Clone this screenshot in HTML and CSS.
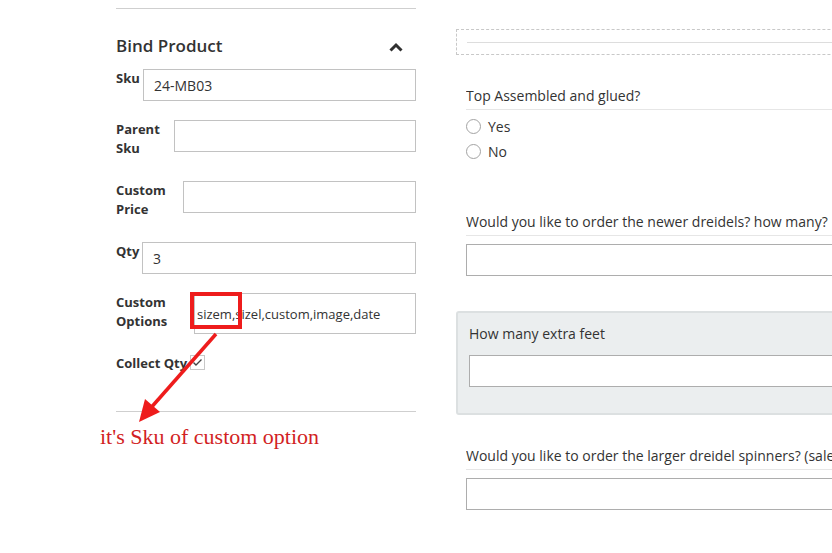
FILE: index.html
```html
<!DOCTYPE html>
<html>
<head>
<meta charset="utf-8">
<link rel="stylesheet" href="styles.css">
</head>
<body>
<div class="page">
  <div class="left">
    <div class="rule rule-top"></div>
    <div class="section-title">
      <span>Bind Product</span>
      <svg class="chevron" width="14" height="10" viewBox="0 0 14 10"><path d="M1.5 8.5 L7 3 L12.5 8.5" fill="none" stroke="#303030" stroke-width="3"/></svg>
    </div>
    <div class="field">
      <label class="lbl lbl-sku">Sku</label>
      <input class="inp" type="text" value="24-MB03">
    </div>
    <div class="field">
      <label class="lbl lbl-parent">Parent Sku</label>
      <input class="inp" type="text" value="">
    </div>
    <div class="field">
      <label class="lbl lbl-price">Custom Price</label>
      <input class="inp" type="text" value="">
    </div>
    <div class="field">
      <label class="lbl lbl-qty">Qty</label>
      <input class="inp" type="text" value="3">
    </div>
    <div class="field">
      <label class="lbl lbl-options">Custom Options</label>
      <input class="inp inp-options" type="text" value="sizem,sizel,custom,image,date">
    </div>
    <div class="field field-last">
      <label class="lbl lbl-collect">Collect Qty</label>
      <span class="checkbox"><svg width="11" height="9" viewBox="0 0 11 9"><path d="M1.5 4.5 L4 7 L9.5 1.5" fill="none" stroke="#444" stroke-width="1.4"/></svg></span>
    </div>
    <div class="rule rule-bottom"></div>
  </div>

  <div class="right">
    <div class="dash-box"><div class="dash-line"></div></div>

    <div class="q-title q-first">Top Assembled and glued?</div>
    <div class="radios">
      <div class="radio-row"><span class="radio"></span><span>Yes</span></div>
      <div class="radio-row"><span class="radio"></span><span>No</span></div>
    </div>

    <div class="q-title q-second">Would you like to order the newer dreidels? how many?</div>
    <input class="inp q-inp" type="text">

    <div class="grey-box">
      <div class="grey-title">How many extra feet</div>
      <input class="inp q-inp" type="text">
    </div>

    <div class="q-title q-third">Would you like to order the larger dreidel spinners? (sale price)</div>
    <input class="inp q-inp" type="text">
  </div>
</div>

<div class="mark-box"></div>
<svg class="arrow" width="832" height="553" viewBox="0 0 832 553">
  <line x1="216" y1="334" x2="149" y2="410" stroke="#ee1c1c" stroke-width="3.5"/>
  <polygon points="139,422 160,412 145,399" fill="#ee1c1c"/>
</svg>
<div class="note">it's Sku of custom option</div>
</body>
</html>
```

FILE: styles.css
```css
html, body {
  margin: 0;
  padding: 0;
  background: #fff;
}
body {
  width: 832px;
  height: 553px;
  overflow: hidden;
  position: relative;
  font-family: "Open Sans", "DejaVu Sans", sans-serif;
  color: #333;
}
.page {
  display: flex;
  gap: 40px;
  padding-left: 116px;
}
.left {
  width: 300px;
  flex: none;
}
.right {
  width: 520px;
  flex: none;
  overflow: hidden;
}
.rule {
  border-top: 1px solid #cfcfcf;
}
.rule-top {
  margin-top: 8px;
}
.rule-bottom {
  margin-top: 34px;
}
.section-title {
  display: flex;
  justify-content: space-between;
  align-items: center;
  padding-top: 26px;
  margin-bottom: 12px;
  padding-right: 13px;
  font-size: 17px;
  font-weight: 600;
  line-height: 22px;
  color: #333;
}
.chevron {
  display: block;
  margin-top: 1px;
}
.field {
  display: flex;
  align-items: flex-start;
  margin-bottom: 19px;
}
.field-last {
  margin-bottom: 0;
}
.lbl {
  flex: none;
  font-size: 13px;
  font-weight: 700;
  line-height: 19px;
  padding-bottom: 4px;
  color: #333;
}
.lbl-sku { width: 27px; }
.lbl-parent { width: 58px; }
.lbl-price { width: 67px; }
.lbl-qty { width: 26px; }
.lbl-options { width: 78px; }
.lbl-collect { width: 74px; white-space: nowrap; }
.inp {
  flex: 1;
  min-width: 0;
  box-sizing: border-box;
  height: 32px;
  border: 1px solid #c2c2c2;
  padding: 0 10px;
  margin: 0;
  font-family: "Open Sans", "DejaVu Sans", sans-serif;
  font-size: 14px;
  color: #333;
  background: #fff;
  outline: none;
}
.inp-options {
  height: 41px;
  padding: 0 2px;
  font-size: 13px;
}
.checkbox {
  box-sizing: border-box;
  width: 15px;
  height: 15px;
  margin-top: 1px;
  border: 1px solid #c8c8c8;
  display: flex;
  align-items: center;
  justify-content: center;
  background: #fff;
}
.dash-box {
  box-sizing: border-box;
  margin-top: 29px;
  height: 26px;
  border: 1px dashed #c8c8c8;
  padding-left: 10px;
}
.dash-line {
  margin-top: 12px;
  border-top: 1px solid #ddd;
}
.q-title {
  font-size: 14px;
  line-height: 20px;
  padding-bottom: 3px;
  margin-left: 10px;
  border-bottom: 1px solid #e6e6e6;
  white-space: nowrap;
  overflow: hidden;
  color: #333;
}
.q-first { margin-top: 31px; }
.q-second { margin-top: 48px; }
.q-third { margin-top: 31px; }
.radios {
  margin-left: 10px;
  margin-top: 9px;
}
.radio-row {
  display: flex;
  align-items: center;
  gap: 7px;
  height: 25px;
  font-size: 14px;
}
.radio-row:first-child { margin-top: -5px; }
.radio {
  box-sizing: border-box;
  width: 15px;
  height: 15px;
  border: 1px solid #a3a3a3;
  border-radius: 50%;
  background: #fff;
}
.q-inp {
  display: block;
  width: 100%;
  margin-top: 8px;
  margin-left: 10px;
  border-color: #adadad;
}
.grey-box {
  box-sizing: border-box;
  margin-top: 35px;
  height: 104px;
  background: #ebeeef;
  border: 2px solid #dce0e1;
  border-radius: 3px;
  padding: 11px 0 0 11px;
}
.grey-title {
  font-size: 14px;
  line-height: 20px;
}
.grey-box .q-inp {
  margin-left: 0;
  margin-top: 11px;
}
.mark-box {
  position: absolute;
  left: 190px;
  top: 292px;
  width: 52px;
  height: 37px;
  box-sizing: border-box;
  border: 4px solid #ee1c1c;
}
.arrow {
  position: absolute;
  left: 0;
  top: 0;
}
.note {
  position: absolute;
  left: 100px;
  top: 424px;
  font-family: "Liberation Serif", "DejaVu Serif", serif;
  font-size: 22px;
  line-height: 26px;
  color: #d21f24;
  white-space: nowrap;
}
```
